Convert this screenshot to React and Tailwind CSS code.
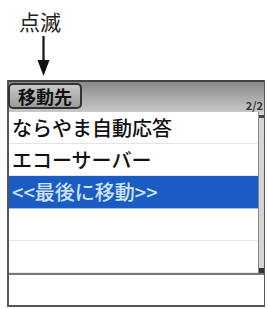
import React from "react";

const jp = { fontFamily: '"Noto Sans CJK JP", "Noto Sans", sans-serif' };

export default function App() {
  const rows = [
    { text: "ならやま自動応答" },
    { text: "エコーサーバー" },
    { text: "<<最後に移動>>", sel: true },
    { text: "" },
    { text: "" },
  ];
  return (
    <div className="w-[268px] h-[309px] bg-white overflow-hidden" style={jp}>
      <div className="h-[80px] relative">
        <div className="absolute left-[19px] top-[6px] text-[21px] leading-[30px] text-[#222]">点滅</div>
        <svg className="absolute left-[36px] top-[36px]" width="16" height="41" viewBox="0 0 16 41">
          <line x1="7.5" y1="0" x2="7.5" y2="26" stroke="#111" strokeWidth="2.2" />
          <polygon points="1.5,24 13.5,24 7.5,40" fill="#111" />
        </svg>
      </div>
      <div className="ml-[7px] w-[258px] h-[227px] border-l-2 border-b-2 border-r border-[#555] flex flex-col">
        <div className="h-[32px] border-t-2 border-[#444] bg-gradient-to-b from-[#8a8a8a] to-[#c8c8c8] flex items-start justify-between relative">
          <div className="mt-[1px] -ml-[1px] h-[26px] w-[74px] rounded-[5px] border-2 border-[#333] bg-gradient-to-b from-[#c9c9c9] to-[#9c9c9c] flex items-center justify-center text-[18px] leading-none font-bold text-[#111]">
            移動先
          </div>
          <div className="absolute right-[1px] bottom-[1px] text-[11px] leading-none font-bold text-[#333]">2/2</div>
        </div>
        <div className="flex h-[163px] border-b-2 border-[#777]">
          <div className="flex-1 flex flex-col">
            {rows.map((r, i) => (
              <div
                key={i}
                className={
                  "h-[32.6px] flex items-center pl-[3px] text-[20px] leading-none font-medium whitespace-nowrap border-b border-[#e4e4e4] " +
                  (r.sel ? "bg-[#1b5cc4] text-[#cfe3ff] border-b-[#9ec2ee]" : "text-[#111]")
                }
              >
                {r.text}
              </div>
            ))}
          </div>
          <div className="w-[6px] flex flex-col border-l border-[#888] bg-[#d4d4d4]">
            <div className="h-[3px] bg-[#444] mt-[3px]" />
            <div className="flex-1" />
            <div className="h-[5px] bg-[#333]" />
          </div>
        </div>
        <div className="flex-1 bg-white" />
      </div>
    </div>
  );
}
